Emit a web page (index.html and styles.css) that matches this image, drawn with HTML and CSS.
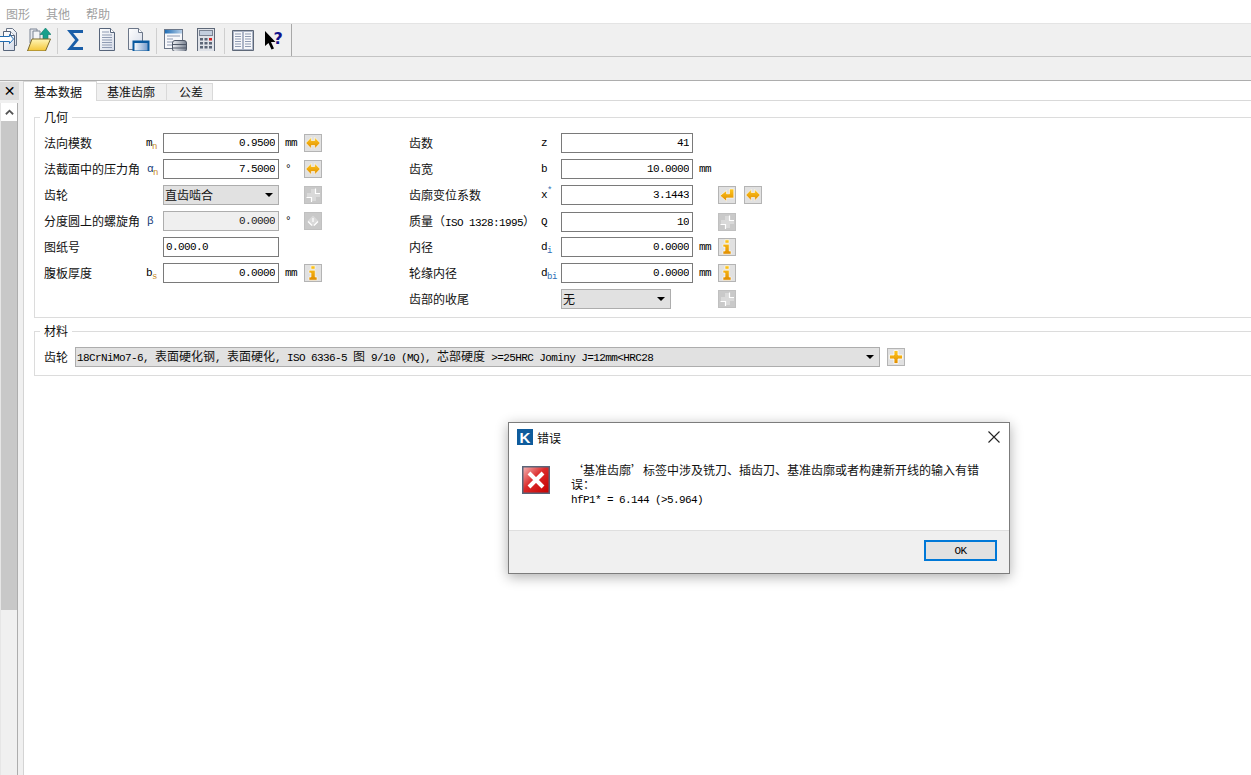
FILE: index.html
```html
<!DOCTYPE html>
<html lang="zh-CN">
<head>
<meta charset="utf-8">
<title>错误</title>
<link rel="stylesheet" href="styles.css">
</head>
<body>
<svg class="defs" aria-hidden="true">
  <defs>
    <linearGradient id="gOrange" x1="0" y1="0" x2="0" y2="1"><stop offset="0" stop-color="#ffc81e"/><stop offset="1" stop-color="#df8c00"/></linearGradient>
    <linearGradient id="gBlue" x1="0" y1="0" x2="1" y2="0"><stop offset="0" stop-color="#ffffff"/><stop offset="1" stop-color="#6f97c9"/></linearGradient>
    <linearGradient id="gHead" x1="0" y1="0" x2="1" y2="0"><stop offset="0" stop-color="#1f6db5"/><stop offset="1" stop-color="#b7cfe8"/></linearGradient>
    <linearGradient id="gPage" x1="0" y1="0" x2="1" y2="1"><stop offset="0" stop-color="#ffffff"/><stop offset="1" stop-color="#d5dbe8"/></linearGradient>
    <linearGradient id="gFolder" x1="0" y1="0" x2="0" y2="1"><stop offset="0" stop-color="#fff6b8"/><stop offset="1" stop-color="#f4c534"/></linearGradient>
    <linearGradient id="gDb" x1="0" y1="0" x2="1" y2="0"><stop offset="0" stop-color="#eef0f4"/><stop offset="1" stop-color="#77808f"/></linearGradient>
    <linearGradient id="gRed" x1="0" y1="0" x2="1" y2="1"><stop offset="0" stop-color="#f4b9b9"/><stop offset=".45" stop-color="#dc2a2a"/><stop offset="1" stop-color="#c40000"/></linearGradient>
    <symbol id="i-arrows" viewBox="0 0 16 16"><path d="M.8 8 6.300 2.300v3.200h3.400V2.300L15.200 8l-5.500 5.700v-3.200H6.300v3.200z" fill="url(#gOrange)" stroke="#fff" stroke-width=".6"/></symbol>
    <symbol id="i-return" viewBox="0 0 16 16"><path d="M10.500 2h4.300v9H7.500v3.200L1 8.700 7.500 3.500v3.300h3z" fill="url(#gOrange)" stroke="#fff" stroke-width=".6"/></symbol>
    <symbol id="i-info" viewBox="0 0 16 16"><path d="M6 .8h4v3.400H6zM4 5.200h6.200V12H12v3.200H4V12h2V8H4z" fill="url(#gOrange)" stroke="#fff" stroke-width=".6"/></symbol>
    <symbol id="i-plus" viewBox="0 0 16 16"><path d="M6 1.500h4v4.500h4.500v4H10v4.500H6V10H1.500V6H6z" fill="url(#gOrange)" stroke="#fff" stroke-width=".8"/></symbol>
    <symbol id="i-off" viewBox="0 0 16 16"><path d="M6 2h5v4h4v4h-4v4H6v-4H2V6h4z" fill="#d9d9d9"/><path d="M1.500 10.500h5v4.500M10.500 1.500v5h4.500" fill="none" stroke="#fff" stroke-width="1.200"/></symbol>
    <symbol id="i-off-down" viewBox="0 0 16 16"><path d="M8 2.500 13.500 8 8 13.500 2.500 8z" fill="#d9d9d9"/><path d="M3 8.500 7 12.500M13 8.500 9 12.500M8 5v4" fill="none" stroke="#fff" stroke-width="1.200"/></symbol>
  </defs>
</svg>

<div class="app">
  <nav class="menu"><span>图形</span><span>其他</span><span>帮助</span></nav>

  <div class="toolbar">
    <svg class="tool tool-first" viewBox="0 0 24 24"><path d="M10.500 1.500h6l4 4v13h-10z" fill="url(#gPage)" stroke="#6b7688"/><path d="M7.500 4.500h7l4 4v15h-11z" fill="url(#gPage)" stroke="#56647a"/><path d="M14.500 4.500v4h4" fill="#fff" stroke="#56647a"/><path d="M3.500 9.500h10v-2l4 4.500-4 4.500v-2h-10z" fill="#fff" stroke="#1f6db5"/></svg>
    <svg class="tool" viewBox="0 0 24 24"><path d="M3 2h7v14H3z" fill="#e6e8ee" stroke="#7b8494"/><path d="M6 4h7v12H6z" fill="#f3f4f7" stroke="#7b8494"/><path d="M18.500 1 24 7.500h-3V14h-5V7.500h-3z" fill="#17a08c" stroke="#0e7a6a" stroke-width=".6"/><path d="M.5 24 5 12h18.500L18.500 24z" fill="url(#gFolder)" stroke="#7c6a2c"/></svg>
    <i class="sep sep-first"></i>
    <svg class="tool" viewBox="0 0 24 24"><path d="M20 4.500H7L14 13 7 21.500H20" fill="none" stroke="#1a5ea8" stroke-width="2.800"/></svg>
    <svg class="tool" viewBox="0 0 24 24"><path d="M4.500 1.500h11l4 4v18h-15z" fill="url(#gPage)" stroke="#56647a"/><path d="M15.500 1.500v4h4" fill="#fff" stroke="#56647a"/><path d="M7 5h7M7 8h10M7 10.500h10M7 13h10M7 15.500h10M7 18h10M7 20.500h10" stroke="#8f9bb3"/></svg>
    <svg class="tool" viewBox="0 0 24 24"><path d="M1.500 1.500h10l4 4v17h-14z" fill="url(#gPage)" stroke="#6b7688"/><path d="M11.500 1.500v4h4" fill="#fff" stroke="#6b7688"/><rect x="6.500" y="14.500" width="15" height="10" fill="url(#gBlue)" stroke="#0a5a9f" stroke-width="2"/><rect x="6" y="14" width="16" height="2" fill="#0a5a9f"/></svg>
    <i class="sep"></i>
    <svg class="tool" viewBox="0 0 24 24"><rect x="1.500" y="2.500" width="18" height="19" fill="#f7f8fb" stroke="#6b7688"/><rect x="2" y="3" width="17" height="3.500" fill="url(#gHead)"/><path d="M4 9h13M4 12h6M4 15h6M4 18h6" stroke="#8f9bb3"/><rect x="9.500" y="13.500" width="14" height="11" rx="2.500" fill="url(#gDb)" stroke="#4e5766"/><path d="M9.500 17.500h14M9.500 21h14" stroke="#4e5766"/></svg>
    <svg class="tool" viewBox="0 0 24 24"><rect x="2.500" y="1.500" width="17" height="23" fill="#dfe2e8" stroke="#5e6878"/><rect x="4.500" y="3.500" width="13" height="5" fill="#c3cede" stroke="#7a8494"/><path d="M5 11h3v2.500H5zM9.500 11h3v2.500h-3zM5 15h3v2.500H5zM9.500 15h3v2.500h-3zM14 15h3v2.500h-3zM5 19h3v2.500H5zM9.500 19h3v2.500h-3zM14 19h3v2.500h-3z" fill="#5b6576"/><path d="M14 11h3v2.500h-3z" fill="#d42020"/></svg>
    <i class="sep"></i>
    <svg class="tool" viewBox="0 0 24 24"><path d="M1.500 3.500h21v20h-21z" fill="#b8c0ce" stroke="#5e6878"/><path d="M2.500 4.500h9v18h-9zM12.500 4.500h9v18h-9z" fill="#f6f7fa" stroke="#8f9bb3" stroke-width=".6"/><path d="M4 7h6M4 9.500h6M4 12h6M4 14.500h6M4 17h6M4 19.500h6M14 7h6M14 9.500h6M14 12h6M14 14.500h6M14 17h6M14 19.500h6" stroke="#8f9bb3"/></svg>
    <svg class="tool" viewBox="0 0 24 24"><path d="M2 4v15l3.500-3 3 6.500 2.500-1-3-6.500h4.500z" fill="#000"/><text class="help-mark" x="10.500" y="17">?</text></svg>
    <i class="sep sep-end"></i>
  </div>

  <div class="band"></div>

  <main class="main">
    <aside class="side">
      <button class="side-close" type="button">✕</button>
      <div class="scroll">
        <div class="scroll-up"><svg viewBox="0 0 10 6" class="scroll-arrow"><path d="M1 5.500 5 1.500 9 5.500" fill="none" stroke="#555" stroke-width="2"/></svg></div>
        <div class="scroll-thumb"></div>
      </div>
    </aside>

    <section class="content">
      <div class="tabs">
        <div class="tab tab-active">基本数据</div>
        <div class="tab">基准齿廓</div>
        <div class="tab tab-last">公差</div>
      </div>
      <div class="pane">
        <fieldset class="group group-geo">
          <legend>几何</legend>
          <div class="geo">
            <div class="col col-left">
              <div class="row"><span>法向模数</span><span class="sym l">m<sub class="o">n</sub></span><input class="field" readonly value="0.9500"><span class="unit l">mm</span><span class="btns"><span class="btn"><svg><use href="#i-arrows"/></svg></span></span></div>
              <div class="row"><span>法截面中的压力角</span><span class="sym l sym-b">α<sub class="o">n</sub></span><input class="field" readonly value="7.5000"><span class="unit l">°</span><span class="btns"><span class="btn"><svg><use href="#i-arrows"/></svg></span></span></div>
              <div class="row"><span>齿轮</span><span class="sym"></span><div class="combo"><span>直齿啮合</span><i class="caret"></i></div><span class="unit"></span><span class="btns"><span class="btn btn-off"><svg><use href="#i-off"/></svg></span></span></div>
              <div class="row"><span>分度圆上的螺旋角</span><span class="sym l sym-b">β</span><input class="field field-off" readonly value="0.0000"><span class="unit l">°</span><span class="btns"><span class="btn btn-off"><svg><use href="#i-off-down"/></svg></span></span></div>
              <div class="row"><span>图纸号</span><span class="sym"></span><input class="field field-left" readonly value="0.000.0"></div>
              <div class="row"><span>腹板厚度</span><span class="sym l">b<sub class="o">s</sub></span><input class="field" readonly value="0.0000"><span class="unit l">mm</span><span class="btns"><span class="btn"><svg><use href="#i-info"/></svg></span></span></div>
            </div>
            <div class="col col-right">
              <div class="row"><span>齿数</span><span class="sym l">z</span><input class="field" readonly value="41"></div>
              <div class="row"><span>齿宽</span><span class="sym l">b</span><input class="field" readonly value="10.0000"><span class="unit l">mm</span></div>
              <div class="row"><span>齿廓变位系数</span><span class="sym l">x<sup class="b">*</sup></span><input class="field" readonly value="3.1443"><span class="unit"></span><span class="btns"><span class="btn"><svg><use href="#i-return"/></svg></span><span class="btn"><svg><use href="#i-arrows"/></svg></span></span></div>
              <div class="row"><span>质量（<span class="l">ISO 1328:1995</span>）</span><span class="sym l">Q</span><input class="field" readonly value="10"><span class="unit"></span><span class="btns"><span class="btn btn-off"><svg><use href="#i-off"/></svg></span></span></div>
              <div class="row"><span>内径</span><span class="sym l">d<sub class="b">i</sub></span><input class="field" readonly value="0.0000"><span class="unit l">mm</span><span class="btns"><span class="btn"><svg><use href="#i-info"/></svg></span></span></div>
              <div class="row"><span>轮缘内径</span><span class="sym l">d<sub class="b">bi</sub></span><input class="field" readonly value="0.0000"><span class="unit l">mm</span><span class="btns"><span class="btn"><svg><use href="#i-info"/></svg></span></span></div>
              <div class="row"><span>齿部的收尾</span><span class="sym"></span><div class="combo combo-short"><span>无</span><i class="caret"></i></div><span class="unit"></span><span class="btns"><span class="btn btn-off"><svg><use href="#i-off"/></svg></span></span></div>
            </div>
          </div>
        </fieldset>

        <fieldset class="group group-mat">
          <legend>材料</legend>
          <div class="mat">
            <span class="mat-label">齿轮</span>
            <div class="combo combo-mat"><span><span class="l">18CrNiMo7-6, </span>表面硬化钢<span class="l">, </span>表面硬化<span class="l">, ISO 6336-5 </span>图<span class="l"> 9/10 (MQ), </span>芯部硬度<span class="l"> &gt;=25HRC Jominy J=12mm&lt;HRC28</span></span><i class="caret"></i></div>
            <span class="btn"><svg><use href="#i-plus"/></svg></span>
          </div>
        </fieldset>
      </div>
    </section>
  </main>

  <div class="dialog" role="alertdialog">
    <header class="dlg-title">
      <svg class="dlg-logo" viewBox="0 0 16 16"><rect width="16" height="16" fill="#0f5c9c"/><text class="dlg-k" x="8" y="13.500">K</text></svg>
      <span class="dlg-name">错误</span>
      <svg class="dlg-x" viewBox="0 0 12 12"><path d="M.5.5 11.500 11.500M11.500.5.5 11.500" stroke="#222" stroke-width="1.100" fill="none"/></svg>
    </header>
    <div class="dlg-body">
      <svg class="dlg-icon" viewBox="0 0 28 28"><rect x=".75" y=".75" width="26.500" height="26.500" fill="url(#gRed)" stroke="#5a6478" stroke-width="1.500"/><path d="M7 7 21 21M21 7 7 21" stroke="#fff" stroke-width="4"/></svg>
      <p class="dlg-text">‘基准齿廓’标签中涉及铣刀、插齿刀、基准齿廓或者构建新开线的输入有错<br>误：<br><span class="l">hfP1* = 6.144 (&gt;5.964)</span></p>
    </div>
    <footer class="dlg-foot"><button class="dlg-ok" type="button"><span class="l">OK</span></button></footer>
  </div>
</div>
</body>
</html>
```
FILE: styles.css
```css
* { box-sizing: border-box; }

html, body {
  margin: 0;
  height: 100%;
  overflow: hidden;
  background: #fff;
}

body {
  font-family: "Noto Sans CJK SC", "Liberation Sans", sans-serif;
  font-size: 12px;
  line-height: 14px;
  color: #111;
}

.defs { position: absolute; width: 0; height: 0; }

.l {
  font-family: "Liberation Mono", "Noto Sans CJK SC", monospace;
  font-size: 11px;
  letter-spacing: -0.6px;
  color: #000;
}

.app {
  position: relative;
  width: 1251px;
  height: 775px;
  display: flex;
  flex-direction: column;
  overflow: hidden;
}

/* menu + toolbar */
.menu {
  height: 24px;
  flex: none;
  display: flex;
  gap: 16px;
  padding: 7px 0 0 6px;
  color: #a0a0a0;
  background: #fff;
  border-bottom: 1px solid #e4e4e4;
}

.toolbar {
  height: 33px;
  flex: none;
  display: flex;
  align-items: flex-start;
  gap: 8px;
  padding-top: 3px;
  background: #f0f0f0;
  border-bottom: 1px solid #c4c4c4;
}

.tool { width: 24px; height: 24px; flex: none; }
.tool-first { margin: 0 -1px 0 -4px; }

.sep {
  width: 1px;
  height: 26px;
  flex: none;
  margin: 1px -2px 0 -3px;
  background: #cfcfcf;
}

.sep-first { margin: 1px -3px 0 -2px; }

.sep-end {
  height: 32px;
  margin: -3px 0 0 -4px;
  background: #a8a8a8;
}

.help-mark {
  font-family: "DejaVu Sans", sans-serif;
  font-size: 16px;
  font-weight: 700;
  fill: #12128a;
}

.band {
  height: 24px;
  flex: none;
  background: #f0f0f0;
  border-bottom: 1px solid #adadad;
}

/* main area */
.main { flex: 1; display: flex; min-height: 0; }

.side {
  width: 24px;
  flex: none;
  background: #f0f0f0;
  border-right: 1px solid #d4d4d4;
  padding-top: 1px;
}

.side-close {
  display: block;
  width: 19px;
  height: 18px;
  padding: 0;
  border: 0;
  background: #dcdcdc;
  color: #000;
  font-family: "DejaVu Sans", sans-serif;
  font-size: 14px;
  font-weight: 700;
  line-height: 18px;
}

.scroll {
  width: 18px;
  height: 672px;
  margin-top: 3px;
  background: #f0f0f0;
  border-right: 1px solid #adadad;
  border-left: 1px solid #e6e6e6;
  display: flex;
  flex-direction: column;
}

.scroll-up {
  height: 18px;
  flex: none;
  background: #fff;
  display: flex;
  align-items: center;
  justify-content: center;
}

.scroll-arrow { width: 9px; height: 6px; }
.scroll-thumb { height: 489px; flex: none; background: #c8c8c8; }

.content {
  flex: 1;
  min-width: 0;
  display: flex;
  flex-direction: column;
  overflow: hidden;
}

.tabs {
  height: 20px;
  flex: none;
  display: flex;
  align-items: flex-end;
  border-bottom: 1px solid #d9d9d9;
}

.tab {
  height: 17px;
  padding: 0 11px 0 10px;
  line-height: 16px;
  background: #f0f0f0;
  border-top: 1px solid #d9d9d9;
  border-right: 1px solid #d9d9d9;
}

.tab-active {
  height: 20px;
  margin-bottom: -1px;
  padding: 0 14px 0 10px;
  line-height: 19px;
  background: #fff;
}

.tab-last { padding: 0 9px 0 12px; }

.pane { flex: 1; padding: 9px 0 0 10px; }

.group {
  min-width: 0;
  margin: 0 -20px 0 0;
  padding: 9px 0 8px 9px;
  border: 1px solid #dcdcdc;
}

.group legend {
  height: 14px;
  padding: 0 4px;
  margin-left: -4px;
}

.group-mat { margin-top: 6px; }

.geo { display: flex; }
.col { display: grid; gap: 6px; align-content: start; }
.col-left { width: 365px; }

.row {
  display: grid;
  height: 20px;
  align-items: center;
  line-height: 20px;
  white-space: nowrap;
}

.col-left .row { grid-template-columns: 102px 17px 116px 25px auto; }
.col-right .row { grid-template-columns: 132px 20px 132px 25px auto; }

.sym { line-height: 20px; }
.sym-b { color: #123a78; padding-left: 1px; }
.sym sub, .sym sup { font-size: 9px; line-height: 0; letter-spacing: -0.4px; }
.sym sub.o { color: #c98a1e; }
.b { color: #2f6fb5; }

.unit { padding-left: 6px; line-height: 20px; }

.field {
  width: 100%;
  height: 20px;
  padding: 0 3px;
  border: 1px solid #7a7a7a;
  border-radius: 0;
  outline: 0;
  background: #fff;
  color: #000;
  text-align: right;
  font-family: "Liberation Mono", monospace;
  font-size: 11px;
  letter-spacing: -0.6px;
}

.field-left { text-align: left; padding-left: 2px; }
.field-off { background: #efefef; border-color: #adadad; color: #222; }

.combo {
  height: 20px;
  display: flex;
  align-items: center;
  justify-content: space-between;
  padding: 0 5px 0 1px;
  background: #e1e1e1;
  border: 1px solid #adadad;
  line-height: 18px;
}

.combo-short { width: 110px; }
.combo-mat { flex: none; width: 805px; }

.caret {
  width: 0;
  height: 0;
  border: 4px solid transparent;
  border-top: 4px solid #000;
  border-bottom: 0;
}

.btns { display: flex; gap: 8px; }

.btn {
  width: 18px;
  height: 18px;
  flex: none;
  display: flex;
  align-items: center;
  justify-content: center;
  background: #e1e1e1;
  border: 1px solid #b4b4b4;
}

.btn svg { width: 16px; height: 16px; display: block; }
.btn-off { background: #c9c9c9; border-color: #c0c0c0; }

.mat { display: flex; align-items: center; height: 20px; }
.mat-label { width: 31px; flex: none; }
.mat .btn { margin-left: 7px; }

/* dialog */
.dialog {
  position: absolute;
  left: 508px;
  top: 422px;
  width: 502px;
  height: 152px;
  display: flex;
  flex-direction: column;
  background: #fff;
  border: 1px solid #7c7c7c;
  box-shadow: 0 3px 12px rgba(0, 0, 0, .32);
}

.dlg-title {
  height: 29px;
  flex: none;
  display: flex;
  align-items: flex-start;
  padding: 6px 9px 0 8px;
}

.dlg-logo { width: 16px; height: 16px; flex: none; }
.dlg-k {
  font-family: "Liberation Sans", sans-serif;
  font-size: 15px;
  font-weight: 700;
  fill: #fff;
  text-anchor: middle;
}
.dlg-name { margin-left: 4px; flex: 1; line-height: 17px; }
.dlg-x { width: 12px; height: 12px; margin-top: 2px; flex: none; }

.dlg-body {
  height: 78px;
  flex: none;
  display: flex;
  align-items: flex-start;
  padding: 11px 0 0 13px;
}

.dlg-icon { width: 28px; height: 28px; flex: none; margin: 3px 21px 0 0; }
.dlg-text { margin: 0; white-space: nowrap; }

.dlg-foot {
  flex: 1;
  display: flex;
  justify-content: flex-end;
  align-items: flex-start;
  padding: 9px 12px 0 0;
  background: #f0f0f0;
  border-top: 1px solid #dfdfdf;
}

.dlg-ok {
  width: 73px;
  height: 21px;
  padding: 0;
  background: #e1e1e1;
  border: 2px solid #0078d7;
  line-height: 16px;
}
```
